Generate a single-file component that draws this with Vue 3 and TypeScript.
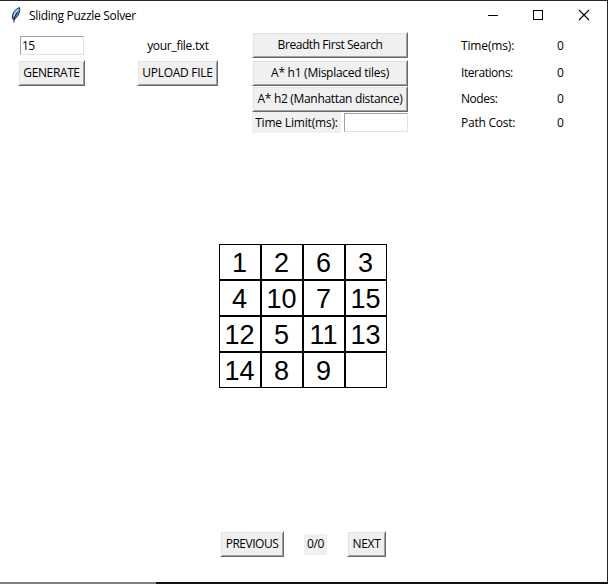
<script setup lang="ts">
import { ref } from 'vue'

interface Stat {
  label: string
  value: number
  cls: string
}

const size = ref('15')
const timeLimit = ref('')
const tiles: (number | null)[] = [1, 2, 6, 3, 4, 10, 7, 15, 12, 5, 11, 13, 14, 8, 9, null]
const stats: Stat[] = [
  { label: 'Time(ms):', value: 0, cls: 'time' },
  { label: 'Iterations:', value: 0, cls: 'iterations' },
  { label: 'Nodes:', value: 0, cls: 'nodes' },
  { label: 'Path Cost:', value: 0, cls: 'cost' },
]
</script>

<template>
  <div class="window">
    <header class="titlebar">
      <svg class="feather" width="12" height="18" viewBox="0 0 12 18">
        <path d="M9.6 1.6 L6.5 3 L3.2 7 L2.2 11 L3 13.5 L5.5 12.5 L8.4 9 L9.8 4Z" fill="#5a93d0" stroke="#18202b" stroke-width="0.9" />
        <path d="M8.6 3 L5.2 6.5 L4 10" fill="none" stroke="#a9d2f5" stroke-width="1.4" />
        <path d="M7.4 6.5 L4.6 11 L3.8 16.5" fill="none" stroke="#111820" stroke-width="1" />
      </svg>
      <span class="title">Sliding Puzzle Solver</span>
      <div class="controls">
        <svg width="46" height="28" viewBox="0 0 46 28" shape-rendering="crispEdges"><path d="M18 14.5H28" stroke="#000" /></svg>
        <svg width="46" height="28" viewBox="0 0 46 28" shape-rendering="crispEdges"><path d="M17.5 9.5H26.5V18.5H17.5Z" fill="none" stroke="#000" /></svg>
        <svg width="46" height="28" viewBox="0 0 46 28"><path d="M17 9L27 19M27 9L17 19" stroke="#000" stroke-width="1.1" /></svg>
      </div>
    </header>

    <section class="toolbar">
      <div class="col source">
        <div class="row first"><input v-model="size" class="entry" /></div>
        <div class="row"><button class="generate">GENERATE</button></div>
      </div>
      <div class="col upload">
        <div class="row first center"><span class="file">your_file.txt</span></div>
        <div class="row"><button class="upload-btn">UPLOAD FILE</button></div>
      </div>
      <div class="col search">
        <div class="row first"><button class="wide bfs">Breadth First Search</button></div>
        <div class="row"><button class="wide h1">A* h1 (Misplaced tiles)</button></div>
        <div class="row"><button class="wide h2">A* h2 (Manhattan distance)</button></div>
        <div class="row limit">
          <label class="tag limit-label"><span>Time Limit(ms):</span></label>
          <input v-model="timeLimit" class="entry" />
        </div>
      </div>
      <div class="col stats">
        <div v-for="(s, i) in stats" :key="s.label" class="row" :class="{ first: i === 0, last: i === 3 }">
          <span class="stat-label" :class="s.cls">{{ s.label }}</span>
          <span class="value">{{ s.value }}</span>
        </div>
      </div>
    </section>

    <main class="stage">
      <div class="board">
        <div v-for="(t, i) in tiles" :key="i" class="tile">{{ t }}</div>
      </div>
    </main>

    <footer class="pager">
      <button class="previous">PREVIOUS</button>
      <span class="tag count">0/0</span>
      <button class="next">NEXT</button>
    </footer>
    <div class="edge"></div>
  </div>
</template>

<style>
body {
  margin: 0;
  overflow: hidden;
}
</style>

<style scoped>
.window {
  box-sizing: border-box;
  width: 608px;
  height: 584px;
  display: flex;
  flex-direction: column;
  background: #fff;
  border-top: 1px solid #2a262c;
  border-right: 1px solid #252525;
  font: 12px/16px "Open Sans", "Noto Sans", sans-serif;
  color: #000;
}
.titlebar {
  height: 31px;
  display: flex;
  align-items: flex-start;
}
.feather {
  margin: 5px 7px 0 10px;
}
.title {
  margin-top: 7px;
  letter-spacing: -0.3px;
  white-space: nowrap;
}
.controls {
  display: flex;
  margin-left: auto;
  margin-right: -1px;
}
.toolbar {
  display: grid;
  grid-template-columns: 119px 115px 209px 1fr;
  padding-left: 18px;
  height: 101px;
}
.row {
  height: 26px;
  display: flex;
  align-items: center;
}
.row.first {
  margin-bottom: 2px;
}
.row.limit {
  height: 21px;
  gap: 3px;
}
.row.last {
  height: 21px;
}
.upload .row.center {
  width: 82px;
  justify-content: center;
}
.upload .first,
.stats .first {
  box-sizing: border-box;
  padding-top: 2px;
}
button {
  box-sizing: border-box;
  height: 26px;
  padding: 0;
  border: 1px solid;
  border-color: #fff #696969 #696969 #fff;
  box-shadow: inset 1px 1px #e3e3e3, inset -1px -1px #a0a0a0;
  background: #f0f0f0;
  color: #000;
  font: inherit;
  white-space: nowrap;
}
.entry {
  box-sizing: border-box;
  width: 64px;
  height: 19px;
  padding: 0 1px;
  border: 1px solid;
  border-color: #a0a0a0 #e3e3e3 #e3e3e3 #a0a0a0;
  border-radius: 0;
  background: #fff;
  font: inherit;
  letter-spacing: -0.5px;
  outline: none;
}
.source .entry {
  margin-left: 2px;
}
.generate {
  width: 67px;
  letter-spacing: -0.38px;
}
.upload-btn {
  width: 81px;
  letter-spacing: -0.28px;
}
.file {
  letter-spacing: -0.3px;
}
.wide {
  width: 156px;
}
.bfs {
  letter-spacing: -0.43px;
}
.h1 {
  letter-spacing: -0.27px;
}
.h2 {
  letter-spacing: -0.32px;
}
.tag {
  display: flex;
  align-items: center;
  justify-content: center;
  height: 21px;
  background: #f0f0f0;
  white-space: nowrap;
}
.limit-label {
  width: 89px;
  letter-spacing: -0.18px;
}
.stat-label {
  width: 96px;
  letter-spacing: -0.45px;
}
.stat-label.time {
  letter-spacing: -0.15px;
}
.stat-label.cost {
  letter-spacing: -0.25px;
}
.value {
  letter-spacing: -0.3px;
}
.stage {
  flex: 1;
  padding: 111px 0 0 219px;
}
.board {
  display: grid;
  grid-template-columns: repeat(4, 42px);
  grid-auto-rows: 36px;
  width: 168px;
}
.tile {
  box-sizing: border-box;
  padding-right: 1px;
  border: 1px solid #000;
  text-align: center;
  font: 27px/36px "Liberation Sans", Arial, sans-serif;
}
.pager {
  display: flex;
  align-items: center;
  gap: 20px;
  height: 26px;
  padding-left: 220px;
  margin-bottom: 25px;
}
.previous {
  width: 64px;
  letter-spacing: -0.48px;
}
.next {
  width: 39px;
  letter-spacing: -0.25px;
}
.count {
  width: 23px;
  letter-spacing: -0.3px;
}
.edge {
  height: 2px;
  margin-right: -1px;
  background: linear-gradient(90deg, #808080 0 156px, #111 156px);
}
</style>
